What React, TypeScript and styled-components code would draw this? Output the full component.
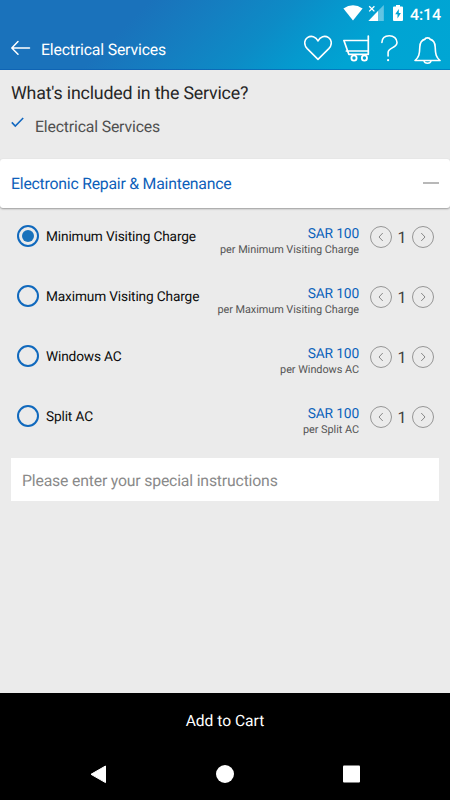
import React, { useState } from "react";
import styled, { createGlobalStyle } from "styled-components";

const GlobalStyle = createGlobalStyle`
  * { box-sizing: border-box; }
  html, body { margin: 0; padding: 0; background: #ebebeb; }
  body { font-family: Roboto, "Liberation Sans", sans-serif; text-rendering: geometricPrecision; }
  button, input { padding: 0; border: 0; background: none; font: inherit; color: inherit; text-rendering: inherit; }
  svg { display: block; flex: none; }
`;

const Screen = styled.div`
  width: 450px;
  height: 800px;
  display: flex;
  flex-direction: column;
  overflow: hidden;
  background: #ebebeb;
`;

const Header = styled.header`
  height: 70px;
  flex: none;
  color: #fff;
  background: linear-gradient(135deg, #1a72bb 0%, #1a72bb 29%, #147fc1 44%, #0d8bc6 57%, #0599ce 68%, #00a4d3 79%, #00a6d4 100%);
  border-bottom: 1px solid rgba(0, 80, 170, 0.4);
`;

const StatusBar = styled.div`
  height: 26px;
  display: flex;
  align-items: flex-start;
  justify-content: flex-end;
  padding: 5px 9px 0 0;
`;

const Clock = styled.span`
  margin-left: 7px;
  width: 31px;
  font-size: 16px;
  line-height: 19px;
  font-weight: 500;
  letter-spacing: -0.1px;
  white-space: nowrap;
`;

const AppBar = styled.div`
  height: 43px;
  display: flex;
  align-items: flex-start;
  padding: 8px 9px 0 10px;
`;

const BackButton = styled.button`
  margin-top: 6px;
`;

const PageTitle = styled.h1`
  margin: 5px 0 0 10px;
  flex: 1;
  font-size: 15.8px;
  line-height: 21px;
  font-weight: 400;
  letter-spacing: -0.16px;
`;

const Actions = styled.div`
  display: flex;
  align-items: flex-start;
`;

const Action = styled.button<{ $gap: number }>`
  margin-left: ${(p) => p.$gap}px;
`;

const Included = styled.section`
  height: 88px;
  flex: none;
  padding: 13px 11px 0;
`;

const IncludedTitle = styled.h2`
  margin: 0;
  font-size: 17.8px;
  line-height: 22px;
  font-weight: 400;
  letter-spacing: -0.18px;
  color: #262626;
`;

const IncludedItem = styled.div`
  display: flex;
  margin-top: 11px;
  font-size: 15.8px;
  line-height: 22px;
  letter-spacing: -0.16px;
  color: #505050;
  gap: 11px;
`;

const Panel = styled.section`
  height: 49px;
  flex: none;
  margin-top: 1px;
  display: flex;
  align-items: center;
  justify-content: space-between;
  padding: 0 11px;
  background: #fff;
  border-radius: 3px;
  box-shadow: 0 1px 2px rgba(0, 0, 0, 0.35);
`;

const PanelTitle = styled.h2`
  margin: 0;
  font-size: 15.8px;
  line-height: 20px;
  font-weight: 400;
  letter-spacing: -0.22px;
  color: #0d60ba;
`;

const Collapse = styled.span`
  width: 16px;
  height: 2px;
  margin-bottom: 1px;
  background: #b8b8b8;
`;

const Options = styled.div`
  padding: 6px 16px 0 17px;
`;

const OptionRow = styled.div`
  height: 60px;
  display: flex;
  align-items: flex-start;
  padding-top: 11px;
`;

const Radio = styled.button`
  && {
    width: 22px;
    height: 22px;
    flex: none;
    display: grid;
    place-items: center;
    border: 2px solid #1069bd;
    border-radius: 50%;
  }
`;

const Dot = styled.span`
  width: 12px;
  height: 12px;
  border-radius: 50%;
  background: #1a72bb;
`;

const OptionName = styled.span`
  margin: 2px 0 0 7px;
  flex: 1;
  font-size: 13.7px;
  line-height: 20px;
  letter-spacing: -0.15px;
  color: #0c0c0c;
  white-space: nowrap;
`;

const PriceBlock = styled.div`
  display: flex;
  flex-direction: column;
  align-items: flex-end;
  white-space: nowrap;
`;

const Price = styled.span`
  font-size: 13.8px;
  line-height: 19px;
  letter-spacing: -0.16px;
  color: #0b62bb;
`;

const Unit = styled.span`
  margin-top: -1px;
  font-size: 10.9px;
  line-height: 14px;
  letter-spacing: -0.05px;
  color: #555;
`;

const Stepper = styled.div`
  display: flex;
  align-items: center;
  margin: 1px 0 0 11px;
`;

const StepButton = styled.button`
  && {
    width: 22px;
    height: 22px;
    display: grid;
    place-items: center;
    border: 1px solid #969696;
    border-radius: 50%;
    color: #888;
  }
`;

const Quantity = styled.span`
  width: 20px;
  padding-top: 1px;
  text-align: center;
  font-size: 16px;
  line-height: 21px;
  color: #404040;
`;

const Instructions = styled.input`
  && {
    height: 43px;
    flex: none;
    margin: 4px 11px 0;
    padding: 2px 11px 0;
    border-radius: 0;
    outline: 0;
    background: #fff;
    font-size: 15.8px;
    letter-spacing: -0.18px;
    color: #333;
  }
  &::placeholder { color: #8a8a8a; opacity: 1; }
`;

const CartButton = styled.button`
  && {
    height: 55px;
    flex: none;
    margin-top: auto;
    padding-top: 1px;
    background: #000;
    color: #fff;
    font-size: 15.6px;
    font-weight: 400;
  }
`;

const NavBar = styled.nav`
  height: 52px;
  flex: none;
  display: flex;
  justify-content: space-between;
  padding: 17px 90px 0;
  background: #000;
`;

const OPTIONS = ["Minimum Visiting Charge", "Maximum Visiting Charge", "Windows AC", "Split AC"];

const stroke = { fill: "none", stroke: "currentColor", strokeLinecap: "round", strokeLinejoin: "round" } as const;

const StatusIcons = () => (
  <>
    <svg width="20" height="16" viewBox="0 0 20 16">
      <path d="M0.4 3.4Q10-3 19.6 3.4L10 15.6Z" fill="#fff" />
    </svg>
    <svg width="16" height="16" viewBox="0 0 16 16">
      <path d="M15.6 0V16H0Z" fill="#fff" opacity=".38" transform="translate(.2 0)" />
      <path d="M10 6V16H.5Z" fill="#fff" />
      <path d="M1.2 1.2L6.4 6.4M6.4 1.2L1.2 6.4" stroke="#fff" strokeWidth="1.3" />
    </svg>
    <svg width="10" height="16" viewBox="0 0 10 16">
      <path fillRule="evenodd" d="M3 0H7V1.5H9Q10 1.5 10 2.5V15Q10 16 9 16H1Q0 16 0 15V2.5Q0 1.5 1 1.5H3ZM5.8 4L2.2 9.3H4.5V13.5L7.9 8H5.8Z" fill="#fff" />
    </svg>
  </>
);

const StatusGroup = styled.div`
  display: flex;
  & > svg:nth-child(2) { margin-left: 5px; }
  & > svg:nth-child(3) { margin-left: 9px; }
`;

const Chevron = ({ right = false }: { right?: boolean }) => (
  <svg width="8" height="10" viewBox="0 0 8 10">
    <path d={right ? "M2.5 1.3L6 5L2.5 8.7" : "M5.5 1.3L2 5L5.5 8.7"} {...stroke} strokeWidth="1" />
  </svg>
);

export default function App() {
  const [selected, setSelected] = useState(0);
  const [counts, setCounts] = useState(OPTIONS.map(() => 1));
  const change = (index: number, delta: number) =>
    setCounts((c) => c.map((n, i) => (i === index ? Math.max(1, n + delta) : n)));

  return (
    <>
      <GlobalStyle />
      <Screen>
        <Header>
          <StatusBar>
            <StatusGroup>
              <StatusIcons />
            </StatusGroup>
            <Clock>4:14</Clock>
          </StatusBar>
          <AppBar>
            <BackButton aria-label="Back">
              <svg width="21" height="16" viewBox="0 0 21 16">
                <path d="M19.5 8H2M8 1.6L1.8 8L8 14.2" {...stroke} strokeWidth="1.5" />
              </svg>
            </BackButton>
            <PageTitle>Electrical Services</PageTitle>
            <Actions>
              <Action $gap={0} aria-label="Favourites">
                <svg width="28" height="28" viewBox="0 0 28 28">
                  <path d="M14 25.4L3.2 14.6C-.6 10.6.4 5.5 3.4 3.6C7.3 1.2 12 2.6 14 7C16 2.6 20.7 1.2 24.6 3.6C27.6 5.5 28.6 10.6 24.8 14.6Z" {...stroke} strokeWidth="1.6" />
                </svg>
              </Action>
              <Action $gap={11} aria-label="Cart">
                <svg width="27" height="28" viewBox="0 0 27 28">
                  <path d="M25.3 2V20.3H5.8L.9 6.5H25.3M3.4 17H25" {...stroke} strokeWidth="1.7" />
                  <g {...stroke} strokeWidth="1.8">
                    <circle cx="11" cy="24" r="2.6" />
                    <circle cx="21.4" cy="24" r="2.6" />
                  </g>
                </svg>
              </Action>
              <Action $gap={11} aria-label="Help">
                <svg width="17" height="28" viewBox="0 0 17 28">
                  <path d="M.9 8.5C1 4.1 4 1.7 8.3 1.7C12.7 1.7 16 4.4 16 8.4C16 14.1 7.1 13.6 7.1 18.4V22" {...stroke} strokeWidth="1.6" />
                  <circle cx="7.1" cy="26.2" r="1.1" fill="currentColor" />
                </svg>
              </Action>
              <Action $gap={16} aria-label="Notifications">
                <svg width="27" height="31" viewBox="0 0 27 31">
                  <path d="M11.2 5.1C11.2 3.5 15.8 3.5 15.8 5.1C20.2 6.2 21.1 9.8 21.2 13C21.4 20.2 22.1 23.3 26 26.5H1C4.9 23.3 5.6 20.2 5.8 13C5.9 9.8 6.8 6.2 11.2 5.1Z" {...stroke} strokeWidth="1.6" />
                  <path d="M10 26.8C10.6 30 16.4 30 17 26.8" {...stroke} strokeWidth="1.5" />
                </svg>
              </Action>
            </Actions>
          </AppBar>
        </Header>

        <Included>
          <IncludedTitle>What's included in the Service?</IncludedTitle>
          <IncludedItem>
            <svg width="13" height="12" viewBox="0 0 13 12">
              <path d="M.8 6.4L4.3 10L12.2 2" fill="none" stroke="#1268c0" strokeWidth="1.6" />
            </svg>
            Electrical Services
          </IncludedItem>
        </Included>

        <Panel>
          <PanelTitle>Electronic Repair &amp; Maintenance</PanelTitle>
          <Collapse />
        </Panel>

        <Options>
          {OPTIONS.map((name, i) => (
            <OptionRow key={name}>
              <Radio role="radio" aria-label={name} aria-checked={selected === i} onClick={() => setSelected(i)}>
                {selected === i && <Dot />}
              </Radio>
              <OptionName>{name}</OptionName>
              <PriceBlock>
                <Price>SAR 100</Price>
                <Unit>per {name}</Unit>
              </PriceBlock>
              <Stepper>
                <StepButton aria-label="Decrease" onClick={() => change(i, -1)}>
                  <Chevron />
                </StepButton>
                <Quantity>{counts[i]}</Quantity>
                <StepButton aria-label="Increase" onClick={() => change(i, 1)}>
                  <Chevron right />
                </StepButton>
              </Stepper>
            </OptionRow>
          ))}
        </Options>

        <Instructions placeholder="Please enter your special instructions" />

        <CartButton>Add to Cart</CartButton>
        <NavBar>
          <svg width="17" height="19" viewBox="0 0 17 19">
            <path d="M15.5 1V17.6L1 9.3Z" fill="#fff" stroke="#fff" strokeLinejoin="round" />
          </svg>
          <svg width="18" height="18" viewBox="0 0 18 18">
            <circle cx="9" cy="9" r="9" fill="#fff" />
          </svg>
          <svg width="17" height="18" viewBox="0 0 17 18">
            <rect y=".5" width="17" height="17" rx="1" fill="#fff" />
          </svg>
        </NavBar>
      </Screen>
    </>
  );
}
